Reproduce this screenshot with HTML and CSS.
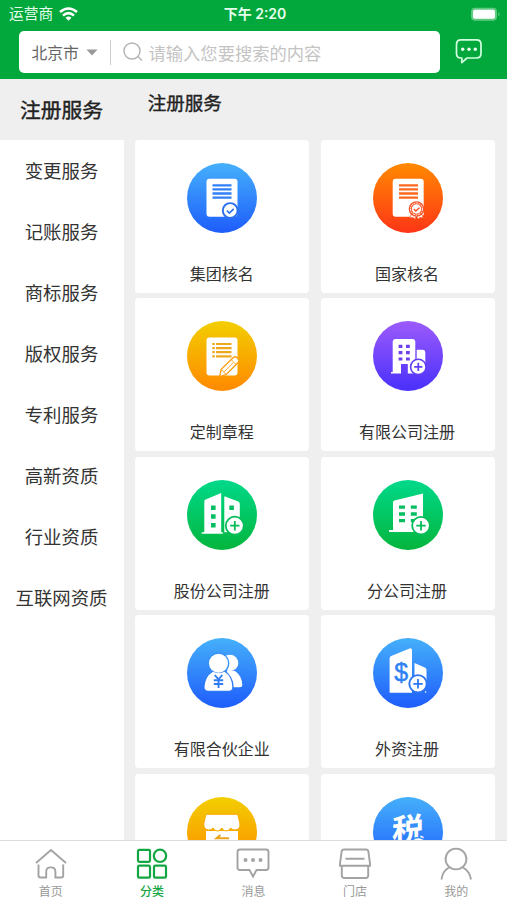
FILE: index.html
```html
<!DOCTYPE html>
<html lang="zh-CN">
<head>
<meta charset="utf-8">
<title>注册服务</title>
<link rel="stylesheet" href="styles.css">
</head>
<body>
<svg class="defs" width="0" height="0" aria-hidden="true">
  <defs>
    <linearGradient id="blue" x1="0" y1="0" x2="0" y2="1"><stop offset="0" stop-color="#45b0fb"/><stop offset="1" stop-color="#1e5cfb"/></linearGradient>
    <linearGradient id="orange" x1="0" y1="0" x2="0" y2="1"><stop offset="0" stop-color="#ff8a00"/><stop offset="1" stop-color="#fd3517"/></linearGradient>
    <linearGradient id="yellow" x1="0" y1="0" x2="0" y2="1"><stop offset="0" stop-color="#f2ce00"/><stop offset="1" stop-color="#ff8900"/></linearGradient>
    <linearGradient id="purple" x1="0" y1="0" x2="0" y2="1"><stop offset="0" stop-color="#9c5bfb"/><stop offset="1" stop-color="#4930fb"/></linearGradient>
    <linearGradient id="green" x1="0" y1="0" x2="0" y2="1"><stop offset="0" stop-color="#00d98a"/><stop offset="1" stop-color="#04b53c"/></linearGradient>
  </defs>
</svg>
<div class="app">
  <header class="header">
    <div class="status">
      <div class="carrier">运营商
        <svg width="19" height="14" viewBox="0 0 19 14" fill="none" stroke="#fff" stroke-width="2.6"><path d="M1 5.1Q9.500-2.100 18 5.100M4 8.500Q9.500 3.900 15 8.500"/><path d="M6.500 10.700Q9.500 8.400 12.500 10.700L9.500 13.700Z" fill="#fff" stroke="none"/></svg>
      </div>
      <div class="time">下午 2:20</div>
      <svg class="battery" width="31" height="15" viewBox="0 0 31 15"><rect x="1" y=".8" width="26" height="13" rx="4" fill="#5fca80"/><rect x="3" y="2.800" width="22" height="9" rx="2" fill="#fff"/><path d="M28.500 5q2 2.300 0 4.600z" fill="#7bd696"/></svg>
    </div>
    <div class="search-row">
      <div class="search">
        <span class="city">北京市</span>
        <svg class="caret" width="12" height="7" viewBox="0 0 12 7"><path d="M.5.5h11L6 6.500z" fill="#999"/></svg>
        <i class="divider"></i>
        <svg class="glass" width="20" height="20" viewBox="0 0 20 20" fill="none" stroke="#b5b5b5" stroke-width="1.500"><circle cx="9" cy="9" r="8"/><path d="M15 14.500l4 4"/></svg>
        <span class="placeholder">请输入您要搜索的内容</span>
      </div>
      <svg class="msg" width="28" height="28" viewBox="0 0 28 28" fill="none" stroke="#d2ffdf" stroke-width="1.700"><path d="M6 1.900h15.500Q26 1.900 26 6.400v9.200Q26 20 21.500 20H12l-5.200 4.600V20H6Q1.500 20 1.500 15.600V6.400Q1.500 1.900 6 1.900Z" stroke-linejoin="round"/><g fill="#e9fff0" stroke="none"><circle cx="7.700" cy="11.300" r="1.700"/><circle cx="14" cy="11.300" r="1.700"/><circle cx="20.300" cy="11.300" r="1.700"/></g></svg>
    </div>
  </header>
  <main class="main">
    <nav class="side">
      <a class="side-item active">注册服务</a>
      <a class="side-item">变更服务</a>
      <a class="side-item">记账服务</a>
      <a class="side-item">商标服务</a>
      <a class="side-item">版权服务</a>
      <a class="side-item">专利服务</a>
      <a class="side-item">高新资质</a>
      <a class="side-item">行业资质</a>
      <a class="side-item">互联网资质</a>
    </nav>
    <section class="content">
      <h1 class="title">注册服务</h1>
      <div class="grid">
        <div class="card">
          <svg class="icon" viewBox="0 0 70 70"><circle cx="35" cy="35" r="35" fill="url(#blue)"/><rect x="19.500" y="15.800" width="31" height="38" rx="3" fill="#fff"/><path d="M25.500 22.300h19M25.500 26.400h19M25.500 30.500h19M25.500 34.600h19" stroke="#2f80f8" stroke-width="2.300"/><circle cx="43.200" cy="47.500" r="7.400" fill="#fff" stroke="#2d70ee" stroke-width="1.900"/><path d="M39.800 47.500l2.500 2.500 4.400-4.100" fill="none" stroke="#2d70ee" stroke-width="1.700"/></svg>
          <span>集团核名</span>
        </div>
        <div class="card">
          <svg class="icon" viewBox="0 0 70 70"><circle cx="35" cy="35" r="35" fill="url(#orange)"/><rect x="19.700" y="15.800" width="31" height="38" rx="3" fill="#fff"/><path d="M26 22.300h19M26 26.400h19M26 30.500h19M26 34.600h19" stroke="#fa691d" stroke-width="2.300"/><path d="M39 50l-2.500 5 3.500-.5 2 1.800 1.500-3.500 1.500 3.500 2-1.800 3.500.500L48 50z" fill="#fff" stroke="#fb5124" stroke-width=".8"/><circle cx="43.500" cy="46" r="7.800" fill="#fb5124"/><circle cx="43.500" cy="46" r="6" fill="#fb5124" stroke="#fff" stroke-width="1" stroke-dasharray="2 .7"/><circle cx="43.500" cy="46" r="4.700" fill="#fff"/><path d="M40.800 46l2 2 3.600-3.300" fill="none" stroke="#fb5124" stroke-width="1.500"/></svg>
          <span>国家核名</span>
        </div>
        <div class="card">
          <svg class="icon" viewBox="0 0 70 70"><circle cx="35" cy="35" r="35" fill="url(#yellow)"/><rect x="19.500" y="16.500" width="31" height="38" rx="3" fill="#fff"/><path d="M25.300 23h2.500m1.200 0h15.500M25.300 27.100h2.500m1.200 0h15.500M25.300 31.200h2.500m1.200 0h15.500M25.300 35.300h2.500m1.200 0h15.500" stroke="#eda91b" stroke-width="2.200"/><path d="M32.700 55.600l1.500-7.300L46.300 36.600q2-1.700 3.800.1l1.200 1.300q1.500 1.800-.2 3.600L39 53.700Z" fill="#fff" stroke="#f8a013" stroke-width="1.400"/><path d="M34.500 48.300l4.500 5.200M44.300 38.700l4.800 4.900M37 50.900l9-9" fill="none" stroke="#f8a013" stroke-width=".9"/></svg>
          <span>定制章程</span>
        </div>
        <div class="card">
          <svg class="icon" viewBox="0 0 70 70"><circle cx="35" cy="35" r="35" fill="url(#purple)"/><path d="M18 51h1.700V21q0-3 3-3h16.600q3 0 3 3v31.600h-7.500V43H28v9.600H18zM43.700 28.700h5.600q3 0 3 3V48h-8.600z" fill="#fff"/><path d="M25.600 25.300h3.800m3.600 0h3.800M25.600 31.700h3.800m3.600 0h3.800M25.600 38h3.800m3.600 0h3.800" stroke="#6d42ec" stroke-width="3.200"/><circle cx="45.300" cy="45.900" r="7.700" fill="#fff" stroke="#623df5" stroke-width="1.600"/><path d="M45.300 41.800V50M41.200 45.900h8.200" stroke="#623df5" stroke-width="1.700"/></svg>
          <span>有限公司注册</span>
        </div>
        <div class="card">
          <svg class="icon" viewBox="0 0 70 70"><circle cx="35" cy="35" r="35" fill="url(#green)"/><path d="M14.700 52.200h2.600V21.500q0-1.500 1.300-2L34.200 13v39.200h1.600v1.600H14.700zM37.300 16.300l14 5.300q1.500.6 1.500 2.400v22L40 52.200h-2.700z" fill="#fff"/><path d="M24 25.500h4.600V30H24zM24 34.300h4.600v4.500H24zM24 43h4.600v4.500H24zM42.300 25.500h4.600V30h-4.600z" fill="#06bd62"/><circle cx="47.800" cy="45.700" r="9" fill="#fff" stroke="#05bd58" stroke-width="1.800"/><path d="M47.800 41v9.400M43.100 45.700h9.400" stroke="#05bd58" stroke-width="1.800"/></svg>
          <span>股份公司注册</span>
        </div>
        <div class="card">
          <svg class="icon" viewBox="0 0 70 70"><circle cx="35" cy="35" r="35" fill="url(#green)"/><path d="M16 50h4V22.600q0-1.700 1.600-2.100L50 13.600V50L43 52H16z" fill="#fff"/><path d="M26 27.200h6m5.800 0h6M26 34h6m5.800 0h6M26 40.700h6m5.800 0h6" stroke="#06bd62" stroke-width="3.300"/><circle cx="48" cy="45.700" r="8.800" fill="#fff" stroke="#05bd58" stroke-width="1.800"/><path d="M48 41v9.400M43.300 45.700h9.400" stroke="#05bd58" stroke-width="1.800"/></svg>
          <span>分公司注册</span>
        </div>
        <div class="card">
          <svg class="icon" viewBox="0 0 70 70"><circle cx="35" cy="35" r="35" fill="url(#blue)"/><circle cx="43" cy="25" r="8.300" fill="#fff"/><path d="M40 33h8q7 5 7.300 14 0 2.300-2.500 2.300H40z" fill="#fff"/><circle cx="31.500" cy="25.300" r="10.800" fill="#348ff6"/><path d="M26 32.300h11.500Q46.500 38 46.800 49.500q0 4-4 4H20.700V40z" fill="#2f7cf5"/><circle cx="31.500" cy="25.300" r="9.500" fill="#fff"/><path d="M26 33.700q5.700 2.800 11.500 0Q45 38.500 45.300 49q0 3.800-3.500 3.800H21.200q-3.700 0-3.700-3.800Q18 38.500 26 33.700Z" fill="#fff"/><path d="M27.700 37l3.800 4.400 3.800-4.400M31.500 41v9M26.800 42.300h9.400M26.800 46h9.400" fill="none" stroke="#2f7cf5" stroke-width="1.900"/></svg>
          <span>有限合伙企业</span>
        </div>
        <div class="card">
          <svg class="icon" viewBox="0 0 70 70"><circle cx="35" cy="35" r="35" fill="url(#blue)"/><path d="M16.600 54.700V20.600q0-2 1.600-2.600L36.500 10.400q2.500-.8 2.500 1.700v42.600zM41.500 25l10.300 4.400q1.700.8 1.700 2.600v16h-12z" fill="#fff"/><text class="dollar" x="28.300" y="43.200" text-anchor="middle">$</text><circle cx="45" cy="45.800" r="8.700" fill="#fff" stroke="#2d75f4" stroke-width="1.900"/><path d="M45 41.100v9.400M40.300 45.800h9.400" stroke="#2d75f4" stroke-width="1.800"/><circle cx="52.600" cy="54" r=".8" fill="#fff"/></svg>
          <span>外资注册</span>
        </div>
        <div class="card">
          <svg class="icon" viewBox="0 0 70 70"><circle cx="35" cy="35" r="35" fill="url(#yellow)"/><path d="M19 34h32v21H19z" fill="#fff"/><path d="M20.500 17.300h28.700q1.500 0 2 1.500L53 27q.4 5.300-4.800 6-3.300 0-4.600-2-1.300 3-4.600 3-2.700 0-4.200-3-1.500 3-4.300 3-3 0-4.400-3-1.500 2-4.500 2-5-.5-4.800-6l1.700-8.200q.5-1.500 2-1.500Z" fill="#fff" stroke="#f8a900" stroke-width="1"/><path d="M42 41.200H29.500l4-3.200" fill="none" stroke="#eaa21d" stroke-width="2"/></svg>
        </div>
        <div class="card">
          <svg class="icon" viewBox="0 0 70 70"><circle cx="35" cy="35" r="35" fill="url(#blue)"/><text class="tax" x="35" y="43.500" text-anchor="middle" transform="translate(0 4) skewY(-5)">税</text><circle cx="45.300" cy="49" r="8.500" fill="#fff" stroke="#318af6" stroke-width="1.500"/></svg>
        </div>
      </div>
    </section>
  </main>
  <footer class="tabs">
    <a class="tab"><svg viewBox="0 0 34 34"><path d="M2 16L17 3l15 13M4.500 17.500v11.300q0 1.700 1.700 1.700h6v-5.800q0-4.300 4.600-4.300t4.600 4.300v5.800h6q1.800 0 1.800-1.700V17.500"/></svg><span>首页</span></a>
    <a class="tab on"><svg viewBox="0 0 34 34"><rect x="3" y="2.800" width="12" height="12" rx="1.300"/><circle cx="25" cy="8.800" r="6.200"/><rect x="3" y="18.700" width="12" height="12" rx="1.300"/><rect x="19" y="18.700" width="12" height="12" rx="1.300"/></svg><span>分类</span></a>
    <a class="tab"><svg viewBox="0 0 34 34"><path d="M4 2.500h26q2.500 0 2.500 2.500v15.500Q32.500 23 30 23h-9.500l-3.500 6.500-3.500-6.500H4q-2.500 0-2.500-2.500V5Q1.500 2.500 4 2.500Z"/><g class="dots"><circle cx="9.500" cy="13" r="2"/><circle cx="17" cy="13" r="2"/><circle cx="24.500" cy="13" r="2"/></g></svg><span>消息</span></a>
    <a class="tab"><svg viewBox="0 0 34 34"><path d="M6 2.500h22q2 0 2.400 2l1.600 12v2.300H2v-2.300l1.600-12q.4-2 2.400-2ZM3.800 19v9.500q0 2.500 2.500 2.500h21.400q2.500 0 2.500-2.500V19M7.500 11.700h19"/></svg><span>门店</span></a>
    <a class="tab"><svg viewBox="0 0 34 34"><circle cx="17" cy="12" r="10.400"/><path d="M10 20.500q-6.500 3.500-7.500 12M24 20.500q6.500 3.500 8 12"/></svg><span>我的</span></a>
  </footer>
</div>
</body>
</html>
```
FILE: styles.css
```css
* { box-sizing: border-box; }

body {
  margin: 0;
  font-family: "Liberation Sans", "Noto Sans CJK SC", sans-serif;
  color: #333;
}

.defs { display: block; }

.app {
  display: flex;
  flex-direction: column;
  width: 507px;
  height: 900px;
  overflow: hidden;
  background: #efefef;
}

.header {
  flex: none;
  height: 79px;
  background: #03a83c;
}

.status {
  display: grid;
  grid-template-columns: 1fr auto 1fr;
  align-items: center;
  height: 27px;
  padding: 1px 6px 0 9px;
  color: #e6ffed;
  font-size: 14.7px;
  line-height: 26px;
}

.carrier { display: flex; align-items: center; gap: 6px; }

.time {
  font-family: Inter, "Noto Sans CJK SC", sans-serif;
  font-size: 14px;
  font-weight: 600;
}

.battery { justify-self: end; }

.search-row {
  display: flex;
  align-items: center;
  margin-top: 4px;
  padding-left: 19px;
}

.search {
  display: flex;
  align-items: center;
  width: 421px;
  height: 42px;
  padding-left: 12.500px;
  border-radius: 5px;
  background: #fff;
  white-space: nowrap;
}

.city { width: 47px; font-size: 15.8px; color: #666; }
.caret { margin-left: 7px; }
.divider { width: 1px; height: 25px; margin-left: 12px; background: #ccc; }
.glass { margin-left: 12px; }
.placeholder { margin-left: 6px; font-size: 17.3px; color: #c4c4c4; }
.msg { margin-left: 15px; }

.main { display: flex; flex: 1; min-height: 0; }

.side {
  flex: none;
  width: 124px;
  background: #fff;
}

.side-item {
  display: block;
  height: 61px;
  padding-right: 1px;
  font-size: 18.4px;
  line-height: 63px;
  text-align: center;
}

.side-item.active {
  background: #efefef;
  color: #222;
  font-size: 20.8px;
  -webkit-text-stroke: 0.4px #222;
}

.content { flex: 1; padding: 0 12.500px 0 11.200px; overflow: hidden; }

.title {
  height: 61px;
  margin: 0;
  padding-left: 12.500px;
  color: #222;
  font-size: 18.5px;
  font-weight: 400;
  line-height: 50px;
  -webkit-text-stroke: 0.4px #222;
}

.grid {
  display: grid;
  grid-template-columns: 1fr 1fr;
  grid-auto-rows: 152.800px;
  gap: 5.600px 11.500px;
}

.card {
  display: flex;
  flex-direction: column;
  align-items: center;
  padding-top: 23px;
  border-radius: 4px;
  background: #fff;
  font-size: 16px;
  line-height: 24px;
}

.card span { margin: 30px 1px 0 0; }

.icon { flex: none; width: 70px; height: 70px; }

.dollar {
  fill: #2f82f6;
  font: 25px "Liberation Sans", sans-serif;
  stroke: #2f82f6;
  stroke-width: 0.5px;
}

.tax {
  fill: #fff;
  font: 700 32px "Noto Sans CJK SC", sans-serif;
}

.tabs {
  display: grid;
  grid-template-columns: repeat(5, 1fr);
  flex: none;
  height: 60px;
  border-top: 1px solid #dcdcdc;
  background: #fff;
}

.tab {
  display: flex;
  flex-direction: column;
  align-items: center;
  padding-top: 6px;
  color: #999;
  font-size: 12px;
  line-height: 16px;
}

.tab svg {
  width: 34px;
  height: 34px;
  fill: none;
  stroke: #a3a3a3;
  stroke-width: 1.9;
}

.tab span { margin-top: 3px; }
.tab .dots { fill: #a3a3a3; stroke: none; }
.tab.on { color: #13a642; font-weight: 500; }
.tab.on svg { stroke: #13a642; stroke-width: 2.2; }
```
